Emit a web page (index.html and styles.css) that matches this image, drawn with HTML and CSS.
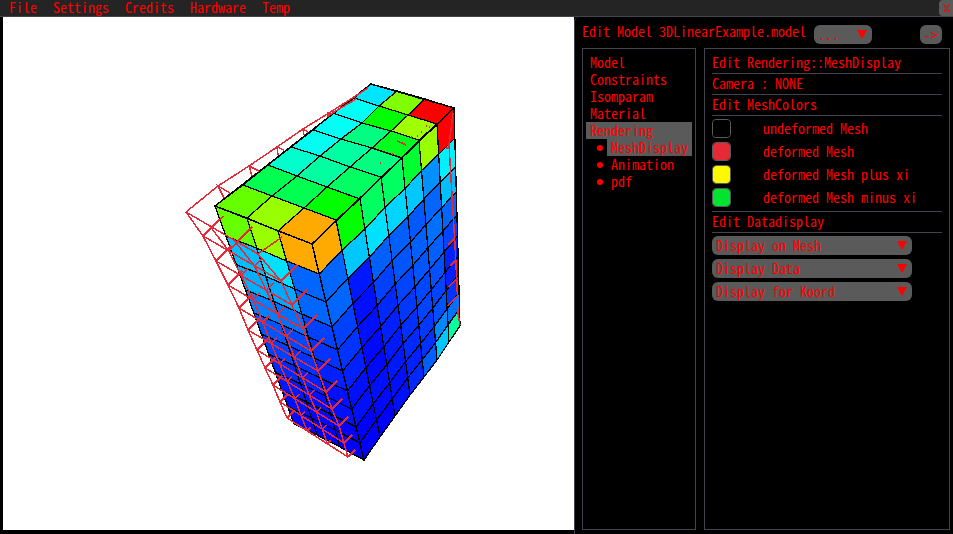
FILE: index.html
```html
<!DOCTYPE html>
<html lang="en">
<head>
<meta charset="utf-8">
<title>Edit Model</title>
<link rel="stylesheet" href="styles.css">
</head>
<body>
<header class="menubar">
  <nav class="menus">
    <button type="button">File</button>
    <button type="button">Settings</button>
    <button type="button">Credits</button>
    <button type="button">Hardware</button>
    <button type="button">Temp</button>
  </nav>
  <button type="button" class="close" aria-label="Close">
    <svg width="7" height="9" viewBox="0 0 7 9"><path d="M0.5 0.5L6.5 8.5M6.5 0.5L0.5 8.5"/></svg>
  </button>
</header>
<main class="workspace">
  <section class="viewport">
    <svg id="mesh" viewBox="3 17 571 513" role="img" aria-label="Deformed mesh"></svg>
  </section>
  <section class="window">
    <header class="window-head">
      <h1>Edit Model 3DLinearExample.model</h1>
      <span class="combo combo-small"><select aria-label="Model"><option>...</option></select></span>
      <button type="button" class="go">-&gt;</button>
    </header>
    <div class="panes">
      <nav class="tree">
        <a href="#model">Model</a>
        <a href="#constraints">Constraints</a>
        <a href="#isomparam">Isomparam</a>
        <a href="#material">Material</a>
        <a href="#rendering" class="selected">Rendering</a>
        <div class="branch"><a href="#mesh" class="selected">MeshDisplay</a></div>
        <div class="branch"><a href="#animation">Animation</a></div>
        <div class="branch"><a href="#pdf">pdf</a></div>
      </nav>
      <div class="editor">
        <h2>Edit Rendering::MeshDisplay</h2>
        <p>Camera : NONE</p>
        <h2>Edit MeshColors</h2>
        <div class="colors">
          <div class="color"><input type="color" id="c1" value="#000000"><label for="c1">undeformed Mesh</label></div>
          <div class="color"><input type="color" id="c2" value="#e62937"><label for="c2">deformed Mesh</label></div>
          <div class="color"><input type="color" id="c3" value="#fdf900"><label for="c3">deformed Mesh plus xi</label></div>
          <div class="color"><input type="color" id="c4" value="#00e430"><label for="c4">deformed Mesh minus xi</label></div>
        </div>
        <h2 class="ruled">Edit Datadisplay</h2>
        <div class="combos">
          <span class="combo"><select aria-label="Display on Mesh"><option>Display on Mesh</option></select></span>
          <span class="combo"><select aria-label="Display Data"><option>Display Data</option></select></span>
          <span class="combo"><select aria-label="Display for Koord"><option>Display for Koord</option></select></span>
        </div>
      </div>
    </div>
  </section>
</main>
<script src="mesh.js"></script>
</body>
</html>
```
FILE: styles.css
```css
* { box-sizing: border-box; }

:root {
  --ink: #ff0000;
  --line: #434350;
  --control: #5a5a5a;
}

body {
  margin: 0;
  height: 100vh;
  display: flex;
  flex-direction: column;
  overflow: hidden;
  background: #000;
  color: var(--ink);
  font: 300 14px/17px "Noto Sans Mono CJK SC", "Liberation Mono", monospace;
}

button, select, input { font: inherit; color: inherit; }
button { border: 0; padding: 0; background: none; }
h1, h2, p { margin: 0; font-size: 14px; font-weight: inherit; }
a { color: inherit; text-decoration: none; }

.menubar {
  display: flex;
  justify-content: space-between;
  height: 17px;
  background: #242424;
  border-bottom: 1px solid var(--line);
}
.menus { display: flex; align-items: flex-start; gap: 16px; padding-left: 9px; }
.menus button { line-height: 14px; }
.close {
  display: flex;
  align-items: center;
  justify-content: center;
  width: 14px;
  background: var(--control);
  border-radius: 4px 0 0 4px;
}
.close svg { stroke: var(--ink); fill: none; shape-rendering: crispEdges; }

.workspace { flex: 1; min-height: 0; display: flex; padding-left: 3px; }
.viewport { flex: 1; min-width: 0; margin-bottom: 4px; background: #fff; }
.viewport svg { display: block; width: 100%; height: 100%; }
.viewport polygon { stroke: #000; stroke-width: 1.3; }
.viewport .edge { fill: none; stroke: #000; stroke-width: 1.5; }
.viewport .wire { fill: none; stroke: #e62937; stroke-width: 1.5; }

.window {
  flex: 0 0 379px;
  display: flex;
  flex-direction: column;
  padding: 0 3px 4px 7px;
  background: #000;
  border-left: 1px solid var(--line);
  border-radius: 5px 0 0 0;
}
.window-head { display: flex; align-items: flex-start; height: 31px; padding: 6px 8px 0 0; }
.window-head h1 { flex: 0 0 232px; white-space: nowrap; }
.go {
  width: 22px;
  height: 19px;
  margin: 2px 0 0 auto;
  line-height: 19px;
  background: var(--control);
  border-radius: 6px;
}

.combo { position: relative; display: block; width: 200px; height: 19px; }
.combo select {
  appearance: none;
  display: block;
  width: 100%;
  height: 19px;
  padding: 0 20px 0 4px;
  border: 0;
  border-radius: 6px;
  background: var(--control);
}
.combo::after {
  content: "";
  position: absolute;
  right: 5px;
  top: 5px;
  border: solid transparent;
  border-width: 9px 5px 0;
  border-top-color: var(--ink);
  pointer-events: none;
}
.combo-small { width: 58px; margin-top: 2px; }

.panes { flex: 1; display: flex; gap: 8px; min-height: 0; }
.tree { flex: 0 0 114px; padding: 5px 3px; border: 1px solid var(--line); }
.tree a { display: block; height: 17px; padding-left: 4px; }
.tree .selected { background: var(--control); }
.branch { display: grid; grid-template-columns: 21px 1fr; align-items: center; }
.branch::before {
  content: "";
  justify-self: center;
  width: 6px;
  height: 6px;
  margin-left: 6px;
  border-radius: 50%;
  background: var(--ink);
}

.editor { flex: 1; min-width: 0; padding: 4px 7px; border: 1px solid var(--line); }
.editor h2, .editor p { height: 21px; line-height: 18px; border-bottom: 1px solid var(--line); }
.colors { display: grid; gap: 4px; padding: 3px 0 4px; }
.color { display: grid; grid-template-columns: 51px 1fr; align-items: center; height: 19px; }
.color input {
  appearance: none;
  width: 19px;
  height: 19px;
  padding: 0;
  border: 1px solid var(--control);
  border-radius: 4px;
  overflow: hidden;
  background: none;
}
.color input::-webkit-color-swatch-wrapper { padding: 0; }
.color input::-webkit-color-swatch { border: 0; border-radius: 3px; }
.editor .ruled { height: 22px; border-top: 1px solid var(--line); }
.combos { display: grid; gap: 4px; padding-top: 3px; }
```
FILE: mesh.js
```js
const svg = document.getElementById('mesh');
const NS = 'http://www.w3.org/2000/svg';

function add(tag, attrs) {
  const el = document.createElementNS(NS, tag);
  for (const key in attrs) el.setAttribute(key, attrs[key]);
  el.setAttribute('shape-rendering', 'crispEdges');
  svg.appendChild(el);
}
const wire = (points) => add('polyline', { class: 'wire', points: points.join(' ') });
const edge = (points) => add('polyline', { class: 'edge', points: points.join(' ') });

/* Draws a quad for each cell between the neighbouring nodes of a grid. */
function face(nodes, colors) {
  colors.forEach((row, r) => row.split(' ').forEach((c, i) => {
    const quad = [nodes[r][i], nodes[r][i + 1], nodes[r + 1][i + 1], nodes[r + 1][i]];
    add('polygon', { points: quad.join(' '), fill: '#' + c });
  }));
}

const depth = [0, 30, 58, 83, 106, 127, 147, 165, 183, 199, 216].map((v) => v / 216);
const mix = (a, b, t) => [a[0] + (b[0] - a[0]) * t, a[1] + (b[1] - a[1]) * t];
const wall = (top, bottom) => depth.map((t) => top.map((p, i) => mix(p, bottom[i], t)));

const roof = [
  [[371, 84], [397, 91], [425, 99], [454, 108]],
  [[354, 98], [379, 106], [408, 115], [437, 124]],
  [[333, 113], [362, 123], [391, 131], [419, 140]],
  [[313, 130], [341, 139], [372, 148], [402, 158]],
  [[291, 147], [320, 156], [350, 167], [381, 177]],
  [[268, 165], [297, 176], [327, 187], [360, 199]],
  [[243, 185], [272, 196], [304, 208], [336, 220]],
  [[215, 206], [247, 218], [278, 231], [312, 244]]
];
face(roof, [
  '00e5ff 80ff00 ff0000',
  '00fff5 00ff00 a0ff00',
  '00fff5 00ff80 00ff20',
  '00fff0 00ffa0 00ff80',
  '00ffcc 00ffa0 00ff60',
  '00ff50 00ff50 00ff00',
  '66ff00 99ff00 ffaa00'
]);

const left = wall(roof[7], [[294, 424], [317, 435], [340, 447], [364, 460]]);
face(left, [
  '66ff00 99ff00 ffaa00',
  '00bfff 00e0ff 0066ff',
  '00b0ff 00a8ff 0066ff',
  '0080ff 0070ff 0040ff',
  '0055ff 0048ff 0033ff',
  '0040ff 0033ff 0020ff',
  '0028ff 0020ff 0010ff',
  '0018ff 0010ff 0010ff',
  '0010ff 0008ff 0000ff',
  '0008ff 0000ff 0000ff'
]);

const right = wall(
  roof.map((row) => row[3]).reverse(),
  [[364, 460], [380, 437], [395, 416], [410, 395], [424, 377], [437, 360], [449, 342], [460, 326]]
);
face(right, [
  'ffaa00 00ff00 00ff60 00ff60 00ff30 99ff00 ff0000',
  '0066ff 00c8ff 00e0ff 00d5ff 00c8ff 0090ff 00f0ff',
  '0066ff 0018ff 0060ff 0060ff 0058ff 0066ff 00bfff',
  '0040ff 0010ff 0040ff 0055ff 0060ff 0070ff 0066ff',
  '0033ff 0010ff 0028ff 0044ff 0055ff 0060ff 0044ff',
  '0020ff 0008ff 0020ff 0038ff 0048ff 0050ff 0020ff',
  '0010ff 0008ff 0018ff 0030ff 0044ff 0044ff 0020ff',
  '0010ff 0010ff 0018ff 0028ff 0038ff 0050ff 0033ff',
  '0000ff 0008ff 0010ff 0020ff 0030ff 0088ff 0070ff',
  '0000ff 0000ff 0010ff 0028ff 0060ff 00c8ff 00ffa0'
]);

edge([roof[7][0], roof[7][3], roof[0][3]]);
edge(left.map((row) => row[3]));
edge([roof[7][0], roof[0][0], roof[0][3]]);

/* Undeformed lattice: outer and inner columns of the front side. */
const outer = [[186, 212], [203, 236], [216, 261], [228, 285], [239, 308], [248, 330],
  [257, 350], [265, 368], [273, 385], [280, 402], [287, 418]];
const inner = [[258, 254], [281, 281], [292, 305], [303, 329], [311, 351], [318, 371],
  [326, 392], [332, 409], [339, 426], [344, 443], [348, 457]];
const lattice = outer.map((p, i) => [p, mix(p, inner[i], 0.33), mix(p, inner[i], 0.66), inner[i]]);
lattice.forEach(wire);
[0, 1, 2, 3].forEach((c) => wire(lattice.map((row) => row[c])));
lattice.slice(1).forEach((row, i) => {
  const a = Math.max(5, 16 - i);
  [0, 1, 2, 3].forEach((c) => {
    const n = c === 0 || c === 3 ? a : a / 2;
    wire([row[c], [row[c][0] + n, row[c][1] - n]]);
  });
});
wire([[212, 228], [223, 216]]);
wire([[237, 242], [252, 227]]);
wire([[258, 254], [282, 237]]);
wire([[203, 236], [212, 228]]);

/* Back edge along the roof, with its spurs. */
wire([[186, 212], [218, 186], [249, 166], [277, 147], [303, 129], [329, 113], [354, 97], [368, 88]]);
wire([[329, 115], [356, 99]]);
[[218, 186, 6, 12, 12, 7], [249, 166, 3, 10, 10, 5], [277, 147, 1, 8, 7, 3],
  [303, 129, 1, 6, 5, 3], [328, 113, 0, 4, 4, 1]].forEach(([x, y, a, b, c, d]) => {
  wire([[x + a, y + b], [x, y], [x + c, y + d]]);
});

/* Lattice edge that shows through the right side. */
wire([[453, 113], [449, 145], [452, 195], [455, 245], [457, 285], [458, 313], [460, 325]]);
wire([[450, 148], [446, 148]]);
wire([[454, 239], [448, 245]]);
wire([[456, 260], [450, 266]]);
wire([[457, 278], [449, 287]]);
wire([[458, 295], [448, 306]]);
wire([[397, 141], [402, 143], [406, 145]]);
[[426, 126], [429, 127], [421, 132], [411, 137], [417, 136], [392, 154], [380, 163]].forEach(([x, y]) => {
  wire([[x, y], [x + 1, y]]);
});
```
